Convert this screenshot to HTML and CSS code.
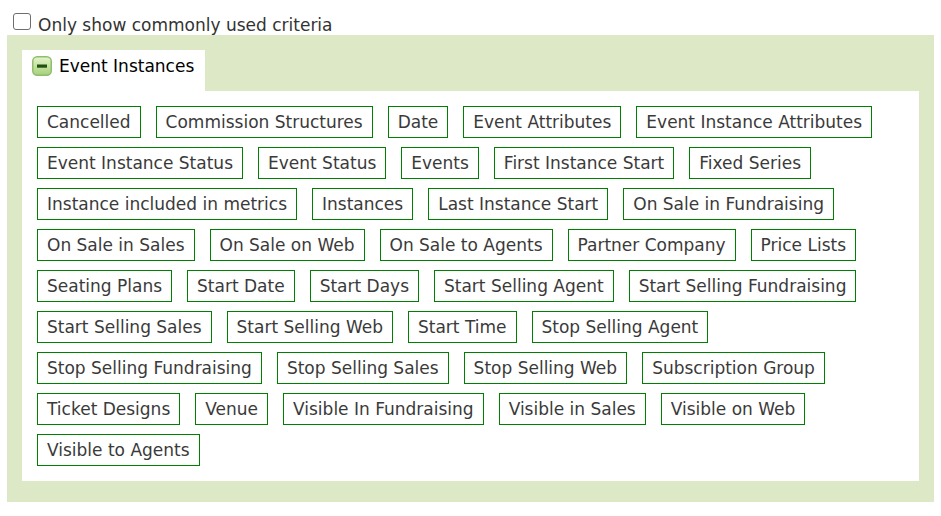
FILE: index.html
```html
<!DOCTYPE html>
<html>
<head>
<meta charset="utf-8">
<link rel="stylesheet" href="styles.css">
</head>
<body>
<div class="filter-row">
  <input type="checkbox" class="check" id="common">
  <label for="common" class="check-label">Only show commonly used criteria</label>
</div>
<div class="panel">
  <div class="tab">
    <svg class="tab-icon" width="20" height="20" viewBox="0 0 20 20">
      <defs>
        <linearGradient id="g" x1="0" y1="0" x2="0" y2="1">
          <stop offset="0" stop-color="#e6f4cc"/>
          <stop offset="1" stop-color="#a6d07a"/>
        </linearGradient>
      </defs>
      <rect x="0.75" y="0.75" width="18.5" height="18.5" rx="4.5" fill="url(#g)" stroke="#8fbd6c" stroke-width="1.5"/>
      <rect x="5" y="8.5" width="10" height="3.2" fill="#234f12"/>
    </svg>
    <span class="tab-title">Event Instances</span>
  </div>
  <div class="content">
    <span class="chip">Cancelled</span>
    <span class="chip">Commission Structures</span>
    <span class="chip">Date</span>
    <span class="chip">Event Attributes</span>
    <span class="chip">Event Instance Attributes</span>
    <span class="chip">Event Instance Status</span>
    <span class="chip">Event Status</span>
    <span class="chip">Events</span>
    <span class="chip">First Instance Start</span>
    <span class="chip">Fixed Series</span>
    <span class="chip">Instance included in metrics</span>
    <span class="chip">Instances</span>
    <span class="chip">Last Instance Start</span>
    <span class="chip">On Sale in Fundraising</span>
    <span class="chip">On Sale in Sales</span>
    <span class="chip">On Sale on Web</span>
    <span class="chip">On Sale to Agents</span>
    <span class="chip">Partner Company</span>
    <span class="chip">Price Lists</span>
    <span class="chip">Seating Plans</span>
    <span class="chip">Start Date</span>
    <span class="chip">Start Days</span>
    <span class="chip">Start Selling Agent</span>
    <span class="chip">Start Selling Fundraising</span>
    <span class="chip">Start Selling Sales</span>
    <span class="chip">Start Selling Web</span>
    <span class="chip">Start Time</span>
    <span class="chip">Stop Selling Agent</span>
    <span class="chip">Stop Selling Fundraising</span>
    <span class="chip">Stop Selling Sales</span>
    <span class="chip">Stop Selling Web</span>
    <span class="chip">Subscription Group</span>
    <span class="chip">Ticket Designs</span>
    <span class="chip">Venue</span>
    <span class="chip">Visible In Fundraising</span>
    <span class="chip">Visible in Sales</span>
    <span class="chip">Visible on Web</span>
    <span class="chip">Visible to Agents</span>
  </div>
</div>
</body>
</html>
```
FILE: styles.css
```css
html, body {
  margin: 0;
  padding: 0;
  background: #ffffff;
}
body {
  font-family: "DejaVu Sans", Verdana, sans-serif;
  font-size: 17px;
}
.filter-row {
  display: flex;
  align-items: flex-start;
  height: 35px;
  box-sizing: border-box;
  padding: 15px 0 0 13px;
}
.check {
  appearance: none;
  -webkit-appearance: none;
  flex: none;
  width: 18px;
  height: 17px;
  margin: -2px 7px 0 0;
  box-sizing: border-box;
  border: 1.5px solid #6e6e6e;
  border-radius: 3px;
  background: #fff;
}
.check-label {
  line-height: 20px;
  color: #333;
}
.panel {
  margin: 0 7px;
  background: #dde9c6;
  padding: 15px 15px 21px;
}
.tab {
  display: inline-flex;
  align-items: flex-start;
  gap: 7px;
  background: #fff;
  height: 41px;
  box-sizing: border-box;
  padding: 6px 11px 0 10px;
}
.tab-icon {
  display: block;
  flex: none;
}
.tab-title {
  line-height: 20px;
  color: #000;
}
.content {
  background: #fff;
  padding: 15px;
  display: flex;
  flex-wrap: wrap;
  gap: 9px 15px;
}
.chip {
  border: 1px solid #008000;
  padding: 0 9px;
  line-height: 30px;
  color: #3a3a3a;
  white-space: nowrap;
}
```
